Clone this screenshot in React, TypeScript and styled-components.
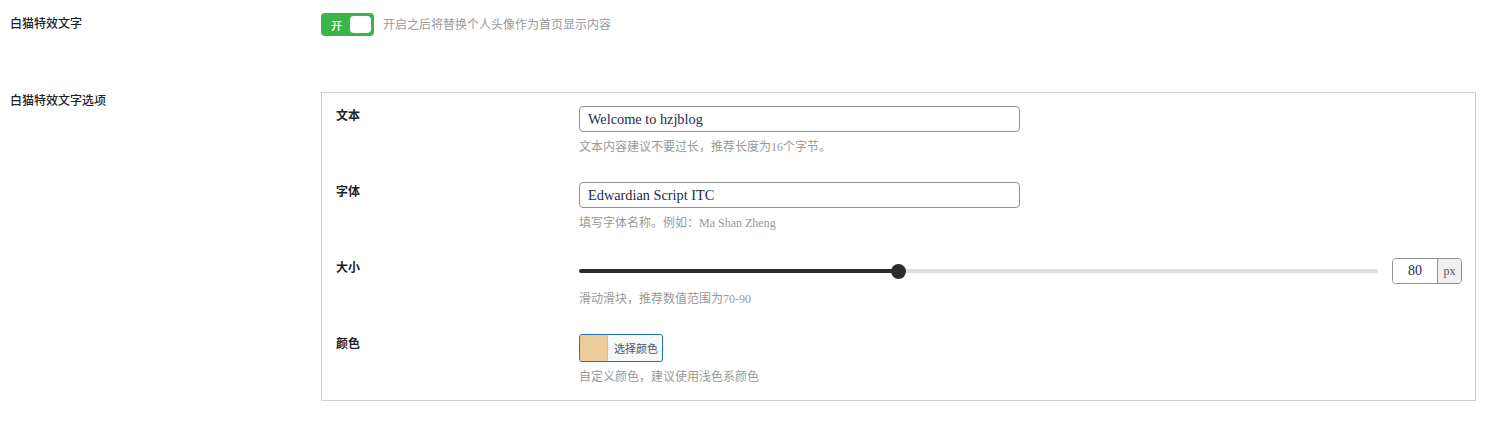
import React, { useState } from 'react';
import styled, { createGlobalStyle } from 'styled-components';

const GlobalStyle = createGlobalStyle`
  html, body {
    margin: 0;
    padding: 0;
    background: #ffffff;
  }
  body {
    font-family: "Liberation Serif", "Noto Sans CJK SC", serif;
    color: #2c3338;
  }
`;

const Page = styled.div`
  padding: 13px 0 0 10px;
  width: 1465px;
`;

const SettingRow = styled.div<{ gap?: number }>`
  display: grid;
  grid-template-columns: 311px 1155px;
  align-items: start;
  margin-bottom: ${props => props.gap ?? 0}px;
`;

const SettingLabel = styled.div<{ top: number }>`
  font-family: "Noto Sans CJK SC", sans-serif;
  font-size: 12px;
  font-weight: 500;
  line-height: 16px;
  color: #1d2327;
  padding-top: ${props => props.top}px;
`;

const ToggleLine = styled.div`
  display: flex;
  align-items: center;
  gap: 9px;
`;

const Switch = styled.button<{ on: boolean }>`
  display: flex;
  align-items: center;
  justify-content: space-between;
  width: 53px;
  height: 23px;
  padding: 0 3px 0 10px;
  border: none;
  border-radius: 4px;
  background: ${props => props.on ? '#3bb54a' : '#c3c4c7'};
  color: #ffffff;
  font-family: "Noto Sans CJK SC", sans-serif;
  font-size: 11px;
  font-weight: 500;
  cursor: pointer;
  box-sizing: border-box;
`;

const Knob = styled.span`
  width: 21px;
  height: 17px;
  border-radius: 4px;
  background: #ffffff;
`;

const Hint = styled.div`
  font-family: "Liberation Serif", "Noto Sans CJK SC", serif;
  font-size: 12px;
  line-height: 18px;
  color: #999999;
`;

const Panel = styled.div`
  border: 1px solid #d0d0d0;
  padding: 13px 13px 12px 13px;
  box-sizing: border-box;
  height: 309px;
`;

const FieldRow = styled.div`
  display: grid;
  grid-template-columns: 244px 1fr;
  align-items: start;
  margin-bottom: 26px;
  &:last-child {
    margin-bottom: 0;
  }
`;

const FieldLabel = styled.div`
  font-family: "Noto Sans CJK SC", sans-serif;
  font-size: 12px;
  font-weight: 700;
  line-height: 16px;
  color: #1d2327;
  padding: 1px 0 0 1px;
`;

const FieldBody = styled.div`
  display: flex;
  flex-direction: column;
  gap: 6px;
`;

const TextInput = styled.input`
  width: 441px;
  height: 26px;
  box-sizing: border-box;
  padding: 0 8px;
  border: 1px solid #8c8f94;
  border-radius: 4px;
  font-family: "Liberation Serif", "Noto Sans CJK SC", serif;
  font-size: 14.3px;
  color: #1d2d4a;
  outline: none;
`;

const SliderLine = styled.div`
  display: flex;
  align-items: center;
  gap: 14px;
`;

const Track = styled.div`
  position: relative;
  flex: 1;
  height: 4px;
  border-radius: 2px;
  background: #dddddd;
`;

const Fill = styled.div`
  height: 100%;
  border-radius: 2px;
  background: #2c2c2c;
`;

const Thumb = styled.div`
  position: absolute;
  top: 50%;
  width: 15px;
  height: 15px;
  margin: -7.5px 0 0 -7.5px;
  border-radius: 50%;
  background: #2c2c2c;
`;

const NumberGroup = styled.div`
  display: flex;
  height: 26px;
  border: 1px solid #8c8f94;
  border-radius: 4px;
  overflow: hidden;
  box-sizing: border-box;
`;

const NumberInput = styled.input`
  width: 44px;
  border: none;
  padding: 0;
  text-align: center;
  font-family: "Liberation Serif", serif;
  font-size: 14px;
  color: #1d2d4a;
  outline: none;
  box-sizing: border-box;
`;

const Unit = styled.span`
  display: flex;
  align-items: center;
  justify-content: center;
  width: 23px;
  border-left: 1px solid #8c8f94;
  background: #f0f0f1;
  font-family: "Liberation Serif", serif;
  font-size: 12px;
  color: #50575e;
`;

const ColorButton = styled.button`
  display: flex;
  align-items: stretch;
  width: 84px;
  height: 28px;
  padding: 0;
  border: 1px solid #2271b1;
  border-radius: 3px;
  overflow: hidden;
  background: #f6f7f7;
  cursor: pointer;
  box-sizing: border-box;
`;

const Swatch = styled.span<{ color: string }>`
  width: 27px;
  background: ${props => props.color};
  border-right: 1px solid #c3c4c7;
`;

const ColorText = styled.span`
  display: flex;
  align-items: center;
  padding-left: 6px;
  font-family: "Noto Sans CJK SC", sans-serif;
  font-size: 11px;
  color: #50575e;
`;

const App: React.FC = () => {
  const [enabled, setEnabled] = useState<boolean>(true);
  const [text, setText] = useState<string>('Welcome to hzjblog');
  const [font, setFont] = useState<string>('Edwardian Script ITC');
  const [size, setSize] = useState<number>(80);
  const max = 200;
  const pct = (size / max) * 100;

  return (
    <>
      <GlobalStyle />
      <Page>
        <SettingRow gap={56}>
          <SettingLabel top={2}>白猫特效文字</SettingLabel>
          <ToggleLine>
            <Switch on={enabled} onClick={() => setEnabled(!enabled)}>
              <span>开</span>
              <Knob />
            </Switch>
            <Hint>开启之后将替换个人头像作为首页显示内容</Hint>
          </ToggleLine>
        </SettingRow>
        <SettingRow>
          <SettingLabel top={0}>白猫特效文字选项</SettingLabel>
          <Panel>
            <FieldRow>
              <FieldLabel>文本</FieldLabel>
              <FieldBody>
                <TextInput value={text} onChange={(e) => setText(e.target.value)} />
                <Hint>文本内容建议不要过长，推荐长度为16个字节。</Hint>
              </FieldBody>
            </FieldRow>
            <FieldRow>
              <FieldLabel>字体</FieldLabel>
              <FieldBody>
                <TextInput value={font} onChange={(e) => setFont(e.target.value)} />
                <Hint>填写字体名称。例如：Ma Shan Zheng</Hint>
              </FieldBody>
            </FieldRow>
            <FieldRow>
              <FieldLabel>大小</FieldLabel>
              <FieldBody>
                <SliderLine>
                  <Track>
                    <Fill style={{ width: `${pct}%` }} />
                    <Thumb style={{ left: `${pct}%` }} />
                  </Track>
                  <NumberGroup>
                    <NumberInput value={size} onChange={(e) => setSize(Number(e.target.value) || 0)} />
                    <Unit>px</Unit>
                  </NumberGroup>
                </SliderLine>
                <Hint>滑动滑块，推荐数值范围为70-90</Hint>
              </FieldBody>
            </FieldRow>
            <FieldRow>
              <FieldLabel>颜色</FieldLabel>
              <FieldBody>
                <ColorButton>
                  <Swatch color="#ebcc9a" />
                  <ColorText>选择颜色</ColorText>
                </ColorButton>
                <Hint>自定义颜色，建议使用浅色系颜色</Hint>
              </FieldBody>
            </FieldRow>
          </Panel>
        </SettingRow>
      </Page>
    </>
  );
};

export default App;
